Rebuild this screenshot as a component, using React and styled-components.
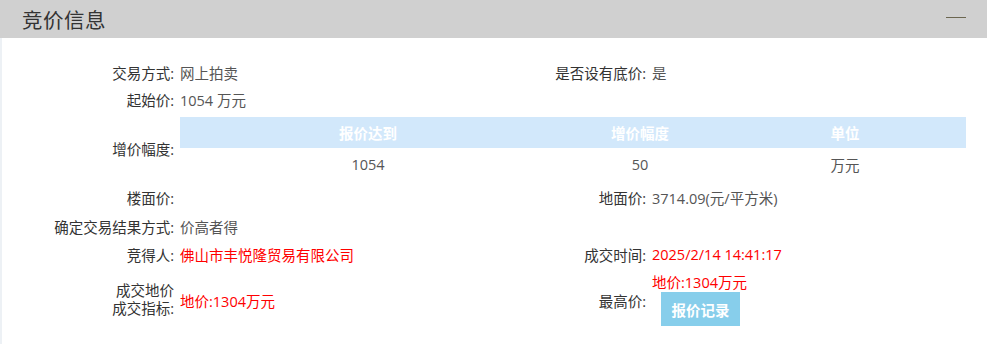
import React from 'react';
import styled, { createGlobalStyle } from 'styled-components';

const GlobalStyle = createGlobalStyle`
	body {
		margin: 0;
		background: #fff;
		font-family: "Open Sans", "Noto Sans CJK SC", sans-serif;
		font-size: 14.5px;
		color: #333;
	}
`;

const rows = [
	{ label: '交易方式:', value: '网上拍卖', label2: '是否设有底价:', value2: '是' },
	{ label: '起始价:', value: '1054 万元' },
];

const bidTable = {
	head: ['报价达到', '增价幅度', '单位'],
	body: ['1054', '50', '万元'],
	widths: [376, 168, 242],
};

export default function App() {
	return (
		<Panel>
			<GlobalStyle />
			<Header>
				<Title>竞价信息</Title>
				<Collapse />
			</Header>

			<Grid>
				{rows.map(({ label, value, label2, value2 }) => (
					<React.Fragment key={label}>
						<Label>{label}</Label>
						<Value>{value}</Value>
						<Label>{label2}</Label>
						<Value>{value2}</Value>
					</React.Fragment>
				))}

				<Label>增价幅度:</Label>
				<TableCell>
					<BidTable>
						<colgroup>
							{bidTable.widths.map((w, i) => (
								<col key={i} style={{ width: w }} />
							))}
						</colgroup>
						<thead>
							<tr>
								{bidTable.head.map((h) => (
									<Th key={h}>{h}</Th>
								))}
							</tr>
						</thead>
						<tbody>
							<tr>
								{bidTable.body.map((d) => (
									<Td key={d}>{d}</Td>
								))}
							</tr>
						</tbody>
					</BidTable>
				</TableCell>

				<Label>楼面价:</Label>
				<Value />
				<Label>地面价:</Label>
				<Value>3714.09(元/平方米)</Value>

				<Label>确定交易结果方式:</Label>
				<Value>价高者得</Value>
				<Label />
				<Value />

				<Label>竞得人:</Label>
				<Value $red>佛山市丰悦隆贸易有限公司</Value>
				<Label>成交时间:</Label>
				<Value $red>2025/2/14 14:41:17</Value>

				<Label>
					<Lines>
						<span>成交地价</span>
						<span>成交指标:</span>
					</Lines>
				</Label>
				<Value $red>地价:1304万元</Value>
				<Label>最高价:</Label>
				<Value>
					<Stack>
						<RedLine>地价:1304万元</RedLine>
						<RecordButton>报价记录</RecordButton>
					</Stack>
				</Value>
			</Grid>
		</Panel>
	);
}

const Panel = styled.div`
	width: 987px;
	height: 344px;
	box-sizing: border-box;
	border-left: 2px solid #edf1f5;
	background: #fff;
`;

const Header = styled.div`
	height: 38px;
	margin-left: -2px;
	background: #d0d0d0;
	display: flex;
	align-items: center;
	justify-content: space-between;
	padding: 0 21px 0 22px;
`;

const Title = styled.h2`
	margin: 0;
	font-size: 20.5px;
	font-weight: 400;
	color: #333;
	letter-spacing: 0.5px;
`;

const Collapse = styled.span`
	width: 20px;
	height: 0;
	border-top: 1px solid #6b6650;
	margin-top: -4px;
`;

const Grid = styled.div`
	display: grid;
	grid-template-columns: 178px 296px 176px 1fr;
	grid-template-rows: 28px 27px 70px 29px 28px 28px 64px;
	padding-top: 20px;
`;

const Label = styled.div`
	display: flex;
	align-items: center;
	justify-content: flex-end;
	padding-right: 6px;
	color: #333;
	white-space: nowrap;
`;

const Value = styled.div`
	display: flex;
	align-items: center;
	color: ${(p) => (p.$red ? '#ff0000' : '#555')};
	white-space: nowrap;
`;

const Lines = styled.div`
	display: flex;
	flex-direction: column;
	align-items: flex-end;
	line-height: 18px;
`;

const Stack = styled.div`
	display: flex;
	flex-direction: column;
	align-items: flex-start;
`;

const RedLine = styled.span`
	color: #ff0000;
	line-height: 18px;
`;

const RecordButton = styled.button`
	margin-left: 9px;
	width: 79px;
	height: 34px;
	border: none;
	background: #87ceeb;
	color: #fff;
	font-family: inherit;
	font-size: 14.5px;
	font-weight: 700;
	cursor: pointer;
`;

const TableCell = styled.div`
	grid-column: 2 / -1;
	padding: 4px 21px 4px 0;
`;

const BidTable = styled.table`
	width: 100%;
	border-collapse: collapse;
	table-layout: fixed;
`;

const Th = styled.th`
	height: 31px;
	padding: 0;
	background: #d2e8fb;
	color: #fff;
	font-weight: 700;
	text-align: center;
`;

const Td = styled.td`
	height: 33px;
	padding: 0;
	color: #555;
	text-align: center;
`;
